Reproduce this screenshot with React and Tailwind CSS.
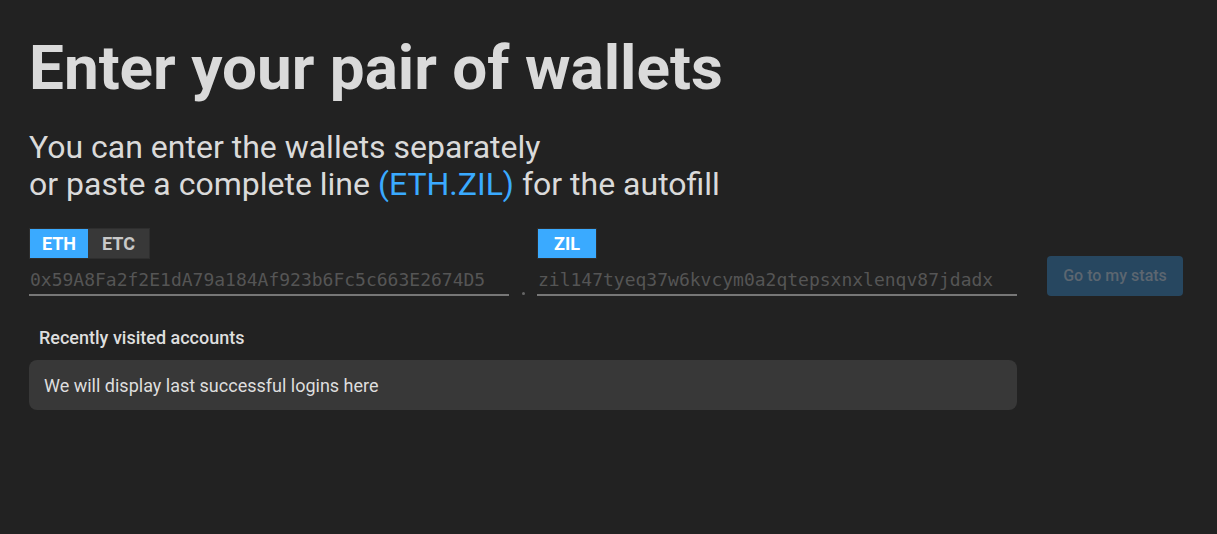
import React, { useState } from 'react';

const tabWidths = { ETH: 'w-[58px]', ETC: 'w-[61px]', ZIL: 'w-[58px]' };

function TabGroup({ tabs, active, onSelect }) {
  return (
    <div className="flex w-fit border border-[#2e2e2e]">
      {tabs.map((t) => (
        <button
          key={t}
          onClick={() => onSelect(t)}
          className={`h-[29px] ${tabWidths[t]} text-[18px] font-bold leading-none ${
            active === t ? 'bg-[#3aaaff] text-white' : 'bg-[#383838] text-[#c8c8c8]'
          }`}
        >
          {t}
        </button>
      ))}
    </div>
  );
}

function WalletInput({ placeholder, value, onChange }) {
  return (
    <input
      className="mt-[5px] h-[32px] w-full border-b-2 border-[#777] bg-transparent px-[1px] text-[18px] text-[#ccc] placeholder-[#555] outline-none"
      style={{ fontFamily: '"DejaVu Sans Mono", "Liberation Mono", monospace' }}
      placeholder={placeholder}
      value={value}
      onChange={(e) => onChange(e.target.value)}
    />
  );
}

export default function App() {
  const [net, setNet] = useState('ETH');
  const [eth, setEth] = useState('');
  const [zil, setZil] = useState('');

  return (
    <div className="min-h-screen bg-[#222222] px-[29px] pt-[28px] font-['Roboto',sans-serif]">
      <h1 className="text-[62px] font-bold leading-[80px] text-[#dadada]">Enter your pair of wallets</h1>
      <p className="mt-[21px] text-[32px] leading-[37px] text-[#dadada]">
        You can enter the wallets separately
        <br />
        or paste a complete line <span className="text-[#3aaaff]">(ETH.ZIL)</span> for the autofill
      </p>

      <div className="mt-[25px] flex items-end">
        <div className="w-[480px]">
          <TabGroup tabs={['ETH', 'ETC']} active={net} onSelect={setNet} />
          <WalletInput placeholder="0x59A8Fa2f2E1dA79a184Af923b6Fc5c663E2674D5" value={eth} onChange={setEth} />
        </div>
        <div className="flex w-[28px] justify-center pb-[1px]">
          <span className="h-[3px] w-[3px] rounded-full bg-[#666]"></span>
        </div>
        <div className="w-[480px]">
          <TabGroup tabs={['ZIL']} active="ZIL" onSelect={() => {}} />
          <WalletInput placeholder="zil147tyeq37w6kvcym0a2qtepsxnxlenqv87jdadx" value={zil} onChange={setZil} />
        </div>
        <button
          disabled
          className="ml-[30px] h-[40px] w-[136px] rounded-[4px] bg-[#274760] text-[16px] font-medium text-[#5c6670]"
        >
          Go to my stats
        </button>
      </div>

      <div className="mt-[31px] w-[988px]">
        <div className="px-[10px] text-[18px] font-medium leading-[22px] text-[#dedede]">Recently visited accounts</div>
        <div className="mt-[11px] flex h-[50px] items-center rounded-[8px] bg-[#383838] px-[15px] text-[18px] text-[#dedede]">
          We will display last successful logins here
        </div>
      </div>
    </div>
  );
}
